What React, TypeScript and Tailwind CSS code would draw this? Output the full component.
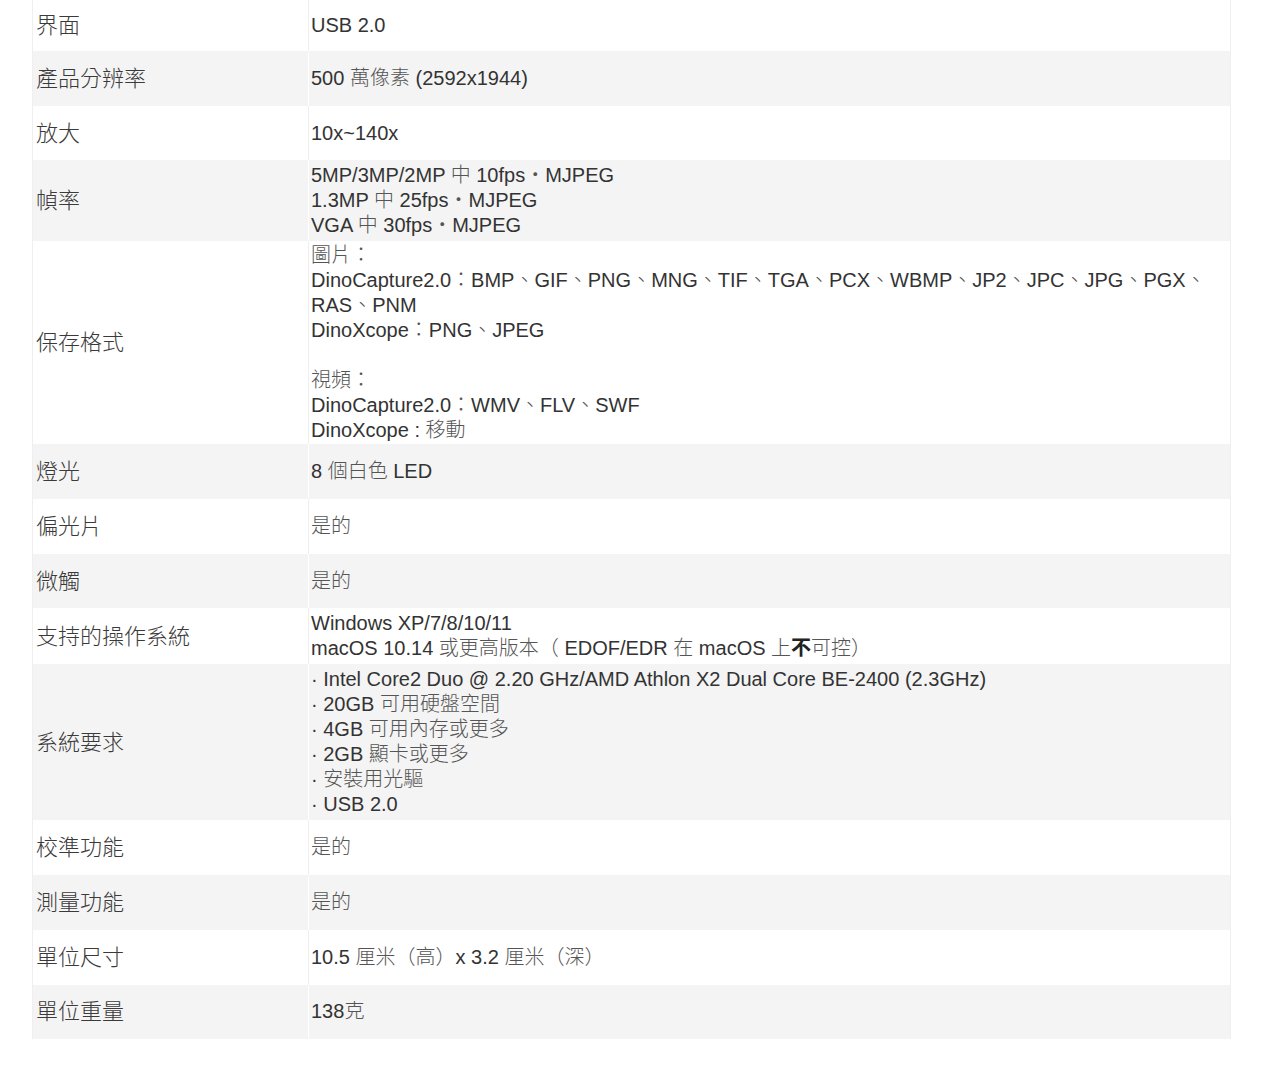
import React from 'react';

type Row = { label: string; lines: string[] };

const ROWS: Row[] = [
  { label: '界面', lines: ['USB 2.0'] },
  { label: '產品分辨率', lines: ['500 萬像素 (2592x1944)'] },
  { label: '放大', lines: ['10x~140x'] },
  { label: '幀率', lines: ['5MP/3MP/2MP 中 10fps・MJPEG', '1.3MP 中 25fps・MJPEG', 'VGA 中 30fps・MJPEG'] },
  {
    label: '保存格式',
    lines: [
      '圖片：',
      'DinoCapture2.0：BMP、GIF、PNG、MNG、TIF、TGA、PCX、WBMP、JP2、JPC、JPG、PGX、',
      'RAS、PNM',
      'DinoXcope：PNG、JPEG',
      '',
      '視頻：',
      'DinoCapture2.0：WMV、FLV、SWF',
      'DinoXcope : 移動',
    ],
  },
  { label: '燈光', lines: ['8 個白色 LED'] },
  { label: '偏光片', lines: ['是的'] },
  { label: '微觸', lines: ['是的'] },
  { label: '支持的操作系統', lines: ['Windows XP/7/8/10/11', 'macOS 10.14 或更高版本（ EDOF/EDR 在 macOS 上*不*可控）'] },
  {
    label: '系統要求',
    lines: [
      '· Intel Core2 Duo @ 2.20 GHz/AMD Athlon X2 Dual Core BE-2400 (2.3GHz)',
      '· 20GB 可用硬盤空間',
      '· 4GB 可用內存或更多',
      '· 2GB 顯卡或更多',
      '· 安裝用光驅',
      '· USB 2.0',
    ],
  },
  { label: '校準功能', lines: ['是的'] },
  { label: '測量功能', lines: ['是的'] },
  { label: '單位尺寸', lines: ['10.5 厘米（高）x 3.2 厘米（深）'] },
  { label: '單位重量', lines: ['138克'] },
];

const CJK = /[\u2E80-\u9FFF\u3000-\u303F\u30FB\uFF00-\uFFEF]/;

// split a line into latin and CJK runs, CJK gets the thinner grey look
const Rich: React.FC<{ text: string }> = ({ text }) => {
  const parts = text.split(/(\*[^*]+\*|[\u2E80-\u9FFF\u3000-\u303F\u30FB\uFF00-\uFFEF]+)/).filter(Boolean);
  return (
    <>
      {parts.map((p, i) => {
        if (p.startsWith('*')) {
          return (
            <span key={i} className="font-bold text-[#222] leading-none">
              {p.slice(1, -1)}
            </span>
          );
        }
        if (CJK.test(p)) {
          return (
            <span key={i} className="font-light text-[#555] leading-none">
              {p}
            </span>
          );
        }
        return <span key={i}>{p}</span>;
      })}
    </>
  );
};

export default function App() {
  return (
    <div className="min-h-screen bg-white font-['Liberation_Sans','Noto_Sans_CJK_TC',sans-serif] text-[20px] leading-[25px] text-[#333]">
      <div className="ml-[32px] w-[1199px] border-x border-[#efefef]">
        {ROWS.map((row, i) => {
          const gray = i % 2 === 1;
          const single = row.lines.length === 1;
          const long = row.lines.length > 6;
          return (
            <div
              key={row.label}
              className={`flex ${gray ? 'bg-[#f4f4f4]' : 'bg-white'} ${
                i === 0 ? 'min-h-[51px]' : 'min-h-[54.7px]'
              }`}
            >
              <div
                className={`w-[276px] shrink-0 flex items-center pl-[3px] border-r ${
                  gray ? 'border-white' : 'border-[#efefef]'
                }`}
              >
                <span className="text-[22px] font-light text-[#3a3a3a]">{row.label}</span>
              </div>
              <div
                className={`flex-1 flex flex-col justify-center pl-[2px] ${
                  single ? '' : long ? 'pt-[2px] pb-[1px]' : 'py-[3px]'
                }`}
              >
                {row.lines.map((line, j) =>
                  line === '' ? (
                    <div key={j} className="h-[25px]" />
                  ) : (
                    <div key={j} className="whitespace-nowrap">
                      <Rich text={line} />
                    </div>
                  )
                )}
              </div>
            </div>
          );
        })}
      </div>
    </div>
  );
}
